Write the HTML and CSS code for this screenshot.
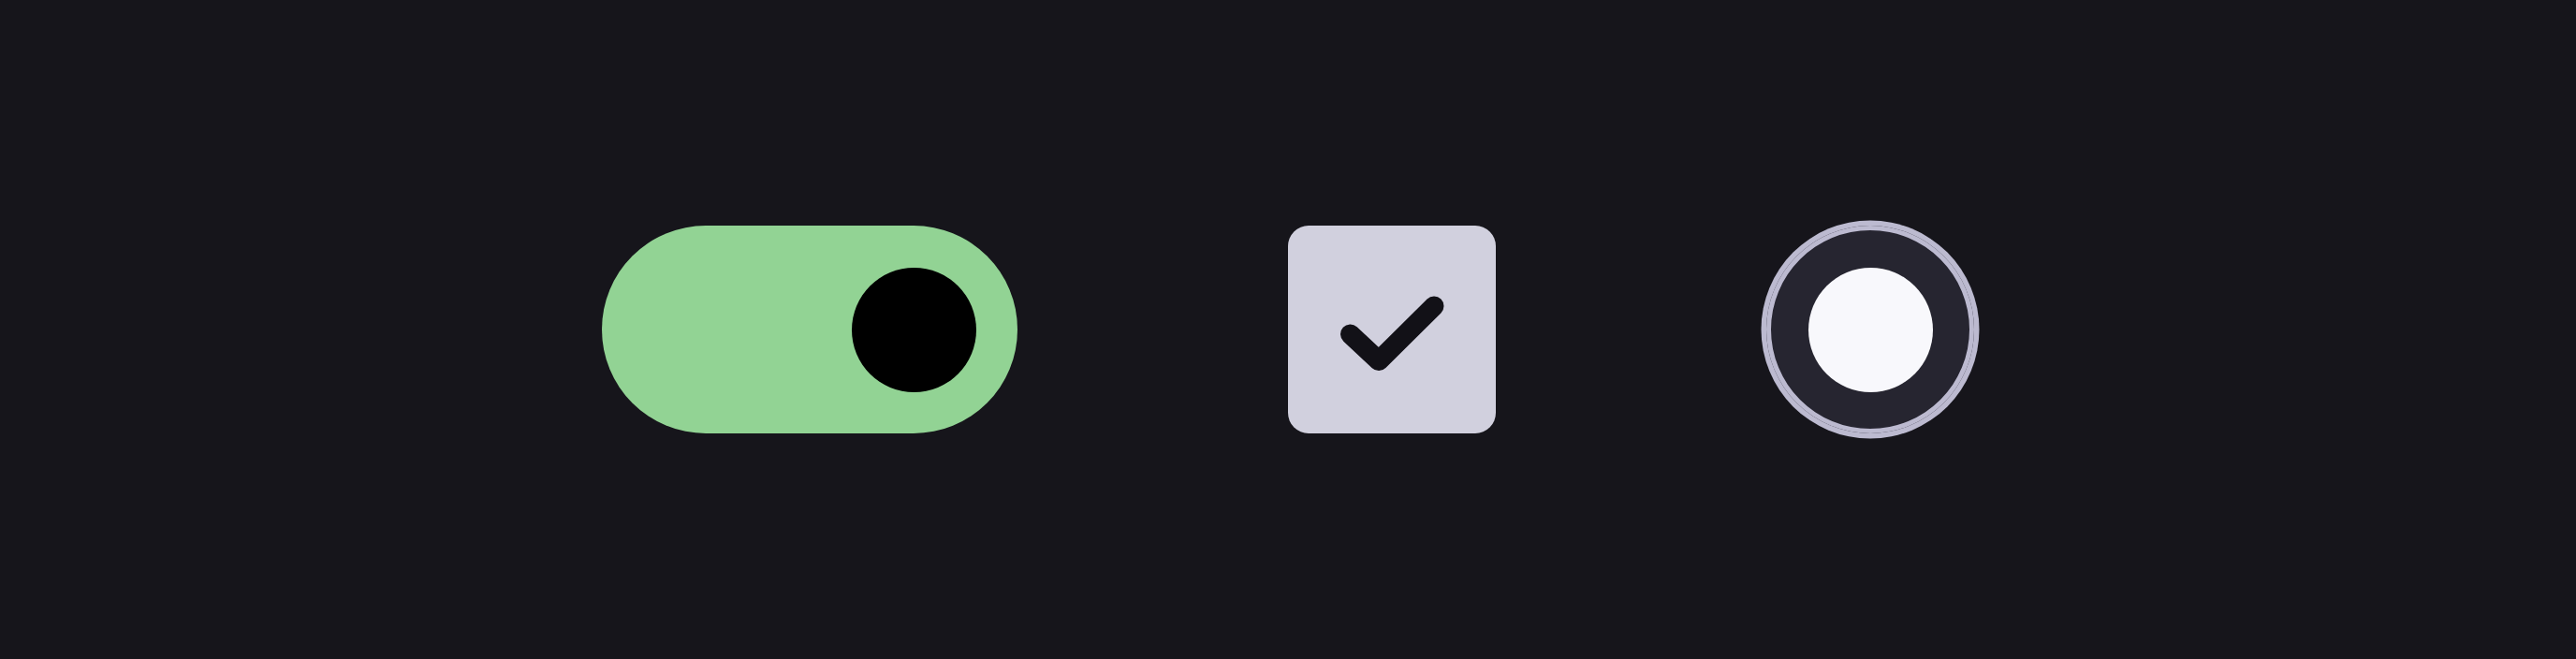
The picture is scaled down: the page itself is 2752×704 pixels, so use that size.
FILE: index.html
```html
<!DOCTYPE html>
<html lang="en">
<head>
<meta charset="utf-8">
<title>Controls</title>
<link rel="stylesheet" href="styles.css">
</head>
<body>
<main class="stage">
  <div class="switch" role="switch" aria-checked="true">
    <span class="switch-knob"></span>
  </div>
  <div class="checkbox" role="checkbox" aria-checked="true">
    <svg class="check-icon" viewBox="0 0 222 222" width="222" height="222" aria-hidden="true">
      <path d="M66.5 116 L97 144.5 L156 86" fill="none" stroke="#121117" stroke-width="21" stroke-linecap="round" stroke-linejoin="round"/>
    </svg>
  </div>
  <div class="radio" role="radio" aria-checked="true">
    <span class="radio-dot"></span>
  </div>
</main>
</body>
</html>
```

FILE: styles.css
```css
html, body {
  margin: 0;
  padding: 0;
  background: #16151b;
}

.stage {
  width: 2752px;
  height: 704px;
  display: flex;
  align-items: center;
  justify-content: center;
  gap: 289px;
}

.switch {
  width: 444px;
  height: 222px;
  border-radius: 111px;
  background: #92d394;
  display: flex;
  align-items: center;
  justify-content: flex-end;
  padding-right: 44px;
  box-sizing: border-box;
}

.switch-knob {
  width: 133px;
  height: 133px;
  border-radius: 50%;
  background: #000000;
}

.checkbox {
  width: 222px;
  height: 222px;
  border-radius: 22px;
  background: #d1d0de;
  display: flex;
}

.check-icon {
  display: block;
}

.radio {
  width: 222px;
  height: 222px;
  border-radius: 50%;
  background: #262530;
  box-shadow: 0 0 0 5.5px #bcbad0, inset 0 0 0 5px #bcbad0;
  display: flex;
  align-items: center;
  justify-content: center;
}

.radio-dot {
  width: 133px;
  height: 133px;
  border-radius: 50%;
  background: #f8f8fc;
}
```
